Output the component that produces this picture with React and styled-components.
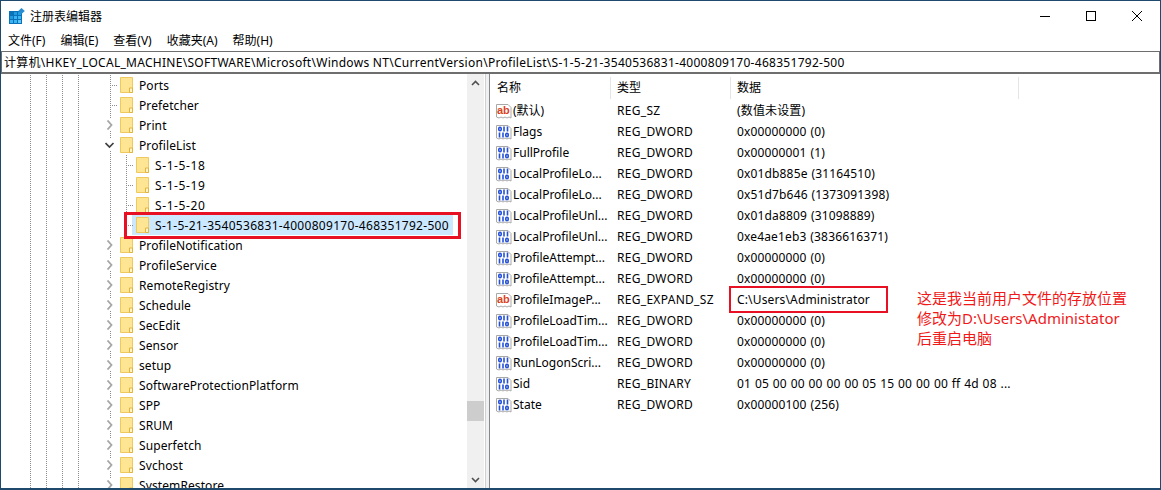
import styled, { createGlobalStyle } from "styled-components";

const fontStack = `"Noto Sans", "Noto Sans CJK SC", sans-serif`;

const GlobalStyle = createGlobalStyle`
  html, body {
    margin: 0;
    padding: 0;
    background: #fff;
  }
  * {
    box-sizing: border-box;
  }
`;

const treeRows = [
  { name: "Ports", kind: "leaf" },
  { name: "Prefetcher", kind: "leaf" },
  { name: "Print", kind: "closed" },
  { name: "ProfileList", kind: "open" },
  { name: "S-1-5-18", kind: "leaf", child: true, track: 0.6 },
  { name: "S-1-5-19", kind: "leaf", child: true, track: 0.6 },
  { name: "S-1-5-20", kind: "leaf", child: true, track: 0.6 },
  { name: "S-1-5-21-3540536831-4000809170-468351792-500", kind: "leaf", child: true, selected: true, track: 0.3 },
  { name: "ProfileNotification", kind: "closed" },
  { name: "ProfileService", kind: "closed" },
  { name: "RemoteRegistry", kind: "closed" },
  { name: "Schedule", kind: "closed" },
  { name: "SecEdit", kind: "closed" },
  { name: "Sensor", kind: "closed" },
  { name: "setup", kind: "closed" },
  { name: "SoftwareProtectionPlatform", kind: "closed" },
  { name: "SPP", kind: "closed" },
  { name: "SRUM", kind: "closed" },
  { name: "Superfetch", kind: "closed" },
  { name: "Svchost", kind: "closed" },
  { name: "SystemRestore", kind: "closed" },
];

const values = [
  ["ab", "(默认)", "REG_SZ", "(数值未设置)"],
  ["bin", "Flags", "REG_DWORD", "0x00000000 (0)"],
  ["bin", "FullProfile", "REG_DWORD", "0x00000001 (1)"],
  ["bin", "LocalProfileLo...", "REG_DWORD", "0x01db885e (31164510)"],
  ["bin", "LocalProfileLo...", "REG_DWORD", "0x51d7b646 (1373091398)"],
  ["bin", "LocalProfileUnl...", "REG_DWORD", "0x01da8809 (31098889)"],
  ["bin", "LocalProfileUnl...", "REG_DWORD", "0xe4ae1eb3 (3836616371)"],
  ["bin", "ProfileAttempt...", "REG_DWORD", "0x00000000 (0)"],
  ["bin", "ProfileAttempt...", "REG_DWORD", "0x00000000 (0)"],
  ["ab", "ProfileImageP...", "REG_EXPAND_SZ", "C:\\Users\\Administrator"],
  ["bin", "ProfileLoadTim...", "REG_DWORD", "0x00000000 (0)"],
  ["bin", "ProfileLoadTim...", "REG_DWORD", "0x00000000 (0)"],
  ["bin", "RunLogonScri...", "REG_DWORD", "0x00000000 (0)"],
  ["bin", "Sid", "REG_BINARY", "01 05 00 00 00 00 00 05 15 00 00 00 ff 4d 08 ..."],
  ["bin", "State", "REG_DWORD", "0x00000100 (256)"],
];

const menus = ["文件(F)", "编辑(E)", "查看(V)", "收藏夹(A)", "帮助(H)"];

//---Icons---//
const AppIcon = () => (
  <svg width="16" height="16" viewBox="0 0 16 16">
    <rect x="0" y="3" width="13" height="13" fill="#0b72b9" />
    <rect x="1" y="4" width="3" height="3" fill="#0b72b9" />
    <rect x="5" y="4" width="3" height="3" fill="#1f9be0" />
    <rect x="9" y="4" width="3" height="3" fill="#1f9be0" />
    <rect x="1" y="8" width="3" height="3" fill="#1f9be0" />
    <rect x="5" y="8" width="3" height="3" fill="#3db4f2" />
    <rect x="9" y="8" width="3" height="3" fill="#3db4f2" />
    <rect x="1" y="12" width="3" height="3" fill="#3db4f2" />
    <rect x="5" y="12" width="3" height="3" fill="#3db4f2" />
    <rect x="9" y="12" width="3" height="3" fill="#5cc6f7" />
    <path d="M12.500 0 L15.800 3 L12.500 6 L9.200 3 Z" fill="#2a8ccf" />
  </svg>
);

const Folder = () => (
  <svg width="13" height="16" viewBox="0 0 13 16">
    <path d="M.5.5h12v15H.5z" fill="#fde594" stroke="#efc95f" />
    <path d="M9.500 15.500V11h3v4.500z" fill="#fff3c4" stroke="#e3b53f" />
  </svg>
);

const PageShape = () => (
  <path
    d="M.5 1.500h11.500l3 3v10.500l-2-1-2 1-2-1-2 1-2-1-2 1-2.500-1z"
    fill="#fff"
    stroke="#a8a8a8"
  />
);

const AbIcon = () => (
  <svg width="16" height="16" viewBox="0 0 16 16">
    <PageShape />
    <text x="1" y="11" fontFamily="Liberation Sans, sans-serif" fontSize="11" fontWeight="700" fill="#d9431f">
      ab
    </text>
  </svg>
);

const BinIcon = () => (
  <svg width="16" height="16" viewBox="0 0 16 16">
    <PageShape />
    <g fill="none" stroke="#2450d8" strokeWidth="1.600">
      <rect x="2.800" y="3.300" width="2.400" height="3.400" rx="1.200" />
      <path d="M8 2.500v5M11.500 2.500v5" />
      <path d="M3.500 8.500v5M7 8.500v5" />
      <rect x="9.800" y="9.300" width="2.400" height="3.400" rx="1.200" />
    </g>
  </svg>
);

const Chevron = ({ open }) =>
  open ? (
    <svg width="10" height="10" viewBox="0 0 10 10">
      <path d="M.5 3l4 4 4-4" fill="none" stroke="#404040" strokeWidth="1.700" />
    </svg>
  ) : (
    <svg width="10" height="10" viewBox="0 0 10 10">
      <path d="M2.500.5l4 4.500-4 4.500" fill="none" stroke="#a6a6a6" strokeWidth="1.800" />
    </svg>
  );

const ScrollArrow = ({ up }) => (
  <svg width="9" height="6" viewBox="0 0 9 6">
    <path d={up ? "M1 5l3.500-3.500L8 5" : "M1 1l3.500 3.500L8 1"} fill="none" stroke="#505050" strokeWidth="1.600" />
  </svg>
);

//-----------------------------//
//---Registry Editor Window----//
//-----------------------------//
const App = () => {
  return (
    <Page>
      <GlobalStyle />
      <TitleBar>
        <TitleLeft>
          <AppIcon />
          <TitleText>注册表编辑器</TitleText>
        </TitleLeft>
        <WindowButtons>
          <WindowButton>
            <svg width="10" height="10" viewBox="0 0 10 10">
              <path d="M0 5.500h10" stroke="#000" />
            </svg>
          </WindowButton>
          <WindowButton>
            <svg width="10" height="10" viewBox="0 0 10 10">
              <rect x=".5" y=".5" width="9" height="9" fill="none" stroke="#000" />
            </svg>
          </WindowButton>
          <WindowButton>
            <svg width="10" height="10" viewBox="0 0 10 10">
              <path d="M0 0l10 10M10 0L0 10" stroke="#000" />
            </svg>
          </WindowButton>
        </WindowButtons>
      </TitleBar>

      <MenuBar>
        {menus.map((m) => (
          <MenuItem key={m}>{m}</MenuItem>
        ))}
      </MenuBar>

      <AddressBar>
        计算机\HKEY_LOCAL_MACHINE\SOFTWARE\Microsoft\Windows NT\CurrentVersion\ProfileList\S-1-5-21-3540536831-4000809170-468351792-500
      </AddressBar>

      <Body>
        <TreePane>
          <TreeList>
            {treeRows.map((row) => (
              <TreeRow key={row.name}>
                <Guide />
                <Guide />
                <Guide />
                <Guide />
                <Guide $blank />
                <Guide $stub={!row.child && row.kind === "leaf"}>
                  {row.kind !== "leaf" && (
                    <Toggle>
                      <Chevron open={row.kind === "open"} />
                    </Toggle>
                  )}
                </Guide>
                {row.child && <Guide $stub />}
                <TreeItem $selected={row.selected} $track={row.track}>
                  <Folder />
                  <span>{row.name}</span>
                </TreeItem>
              </TreeRow>
            ))}
          </TreeList>
          <ScrollBar>
            <ScrollButton>
              <ScrollArrow up />
            </ScrollButton>
            <ScrollTrack>
              <ScrollThumb />
            </ScrollTrack>
            <ScrollButton>
              <ScrollArrow />
            </ScrollButton>
          </ScrollBar>
        </TreePane>

        <Splitter />

        <ValuePane>
          <HeaderRow>
            <HeaderCell $width={120}>名称</HeaderCell>
            <HeaderCell $width={120}>类型</HeaderCell>
            <HeaderCell $width={288}>数据</HeaderCell>
          </HeaderRow>
          {values.map(([icon, name, type, data], i) => (
            <ValueRow key={i}>
              <NameCell>
                {icon === "ab" ? <AbIcon /> : <BinIcon />}
                <span>{name}</span>
              </NameCell>
              <TypeCell>{type}</TypeCell>
              <DataCell>{data}</DataCell>
            </ValueRow>
          ))}
        </ValuePane>
      </Body>

      <TreeMark />
      <ValueMark />
      <Note>
        这是我当前用户文件的存放位置
        <br />
        修改为D:\Users\Administator
        <br />
        后重启电脑
      </Note>
    </Page>
  );
};

export default App;

const Page = styled.div`
  position: relative;
  width: 1161px;
  height: 490px;
  overflow: hidden;
  display: flex;
  flex-direction: column;
  background: #fff;
  border: 1px solid #1f4a6e;
  border-bottom-width: 2px;
  font-family: ${fontStack};
  font-size: 12px;
  color: #000;
`;

const TitleBar = styled.div`
  height: 29px;
  flex: none;
  display: flex;
  align-items: center;
  justify-content: space-between;
`;

const TitleLeft = styled.div`
  display: flex;
  align-items: center;
  gap: 5px;
  padding-left: 8px;
`;

const TitleText = styled.span`
  font-size: 12px;
  color: #000;
`;

const WindowButtons = styled.div`
  display: flex;
`;

const WindowButton = styled.div`
  width: 46px;
  height: 29px;
  display: flex;
  align-items: center;
  justify-content: center;
`;

const MenuBar = styled.div`
  height: 21px;
  flex: none;
  display: flex;
  align-items: center;
  gap: 15px;
  padding: 1px 0 0 7px;
`;

const MenuItem = styled.span`
  line-height: 20px;
`;

const AddressBar = styled.div`
  height: 23px;
  flex: none;
  display: flex;
  align-items: center;
  padding-left: 2px;
  background: #fff;
  border: 1px solid #6e6e6e;
  border-width: 1px 1px 2px 1px;
  white-space: pre;
  letter-spacing: 0.28px;
`;

const Body = styled.div`
  flex: 1;
  min-height: 0;
  display: flex;
`;

const TreePane = styled.div`
  width: 484px;
  flex: none;
  display: flex;
  padding-right: 1px;
  overflow: hidden;
`;

const TreeList = styled.div`
  flex: 1;
  min-width: 0;
  overflow: hidden;
  padding-top: 1px;
`;

const TreeRow = styled.div`
  height: 20px;
  display: flex;
  padding-left: 21px;
  white-space: nowrap;
`;

const Guide = styled.div`
  position: relative;
  width: 16px;
  flex: none;
  height: 100%;
  background-image: ${(p) =>
    p.$blank
      ? "none"
      : "repeating-linear-gradient(to bottom, #8c8c8c 0 1px, transparent 1px 2px)"};
  background-size: 1px 100%;
  background-position: 8px 0;
  background-repeat: no-repeat;

  &::after {
    content: "";
    display: ${(p) => (p.$stub ? "block" : "none")};
    position: absolute;
    left: 9px;
    right: 0;
    top: 10px;
    height: 1px;
    background-image: repeating-linear-gradient(to right, transparent 0 1px, #8c8c8c 1px 2px);
  }
`;

const Toggle = styled.div`
  position: absolute;
  left: 2px;
  top: 4px;
  width: 12px;
  height: 12px;
  display: flex;
  align-items: center;
  justify-content: center;
  background: #fff;
`;

const TreeItem = styled.div`
  display: flex;
  align-items: center;
  gap: 6px;
  height: 100%;
  margin-left: -2px;
  padding: 0 4px 0 4px;
  letter-spacing: ${(p) => p.$track || 0.1}px;
  background: ${(p) => (p.$selected ? "#cce8ff" : "transparent")};
`;

const ScrollBar = styled.div`
  width: 17px;
  flex: none;
  display: flex;
  flex-direction: column;
  background: #f0f0f0;
`;

const ScrollButton = styled.div`
  height: 17px;
  flex: none;
  display: flex;
  align-items: center;
  justify-content: center;
`;

const ScrollTrack = styled.div`
  flex: 1;
  padding-top: 310px;
`;

const ScrollThumb = styled.div`
  height: 20px;
  background: #cdcdcd;
`;

const Splitter = styled.div`
  width: 5px;
  flex: none;
  background: #f0f0f0;
  border-left: 1px solid #d0d0d0;
  border-right: 1px solid #828790;
`;

const ValuePane = styled.div`
  flex: 1;
  min-width: 0;
  overflow: hidden;
`;

const HeaderRow = styled.div`
  height: 26px;
  display: flex;
  padding: 3px 0 1px 1px;
`;

const HeaderCell = styled.div`
  width: ${(p) => p.$width}px;
  flex: none;
  padding-left: 6px;
  line-height: 22px;
  border-right: 1px solid #e5e5e5;
`;

const ValueRow = styled.div`
  height: 21px;
  display: grid;
  grid-template-columns: 121px 120px 1fr;
  align-items: center;
  padding-left: 6px;
  white-space: nowrap;
  line-height: 20px;
`;

const NameCell = styled.div`
  display: flex;
  align-items: center;
  gap: 1px;
`;

const TypeCell = styled.span`
  letter-spacing: 0.3px;
`;

const DataCell = styled.span`
  letter-spacing: 0.15px;
  word-spacing: 0.6px;
`;

const TreeMark = styled.div`
  position: absolute;
  left: 123px;
  top: 211px;
  width: 337px;
  height: 27px;
  border: 3px solid #e81123;
`;

const ValueMark = styled.div`
  position: absolute;
  left: 728px;
  top: 285px;
  width: 159px;
  height: 27px;
  border: 2px solid #e81123;
`;

const Note = styled.div`
  position: absolute;
  left: 916px;
  top: 287px;
  font-size: 15px;
  line-height: 20px;
  color: #f01919;
  white-space: nowrap;
`;
